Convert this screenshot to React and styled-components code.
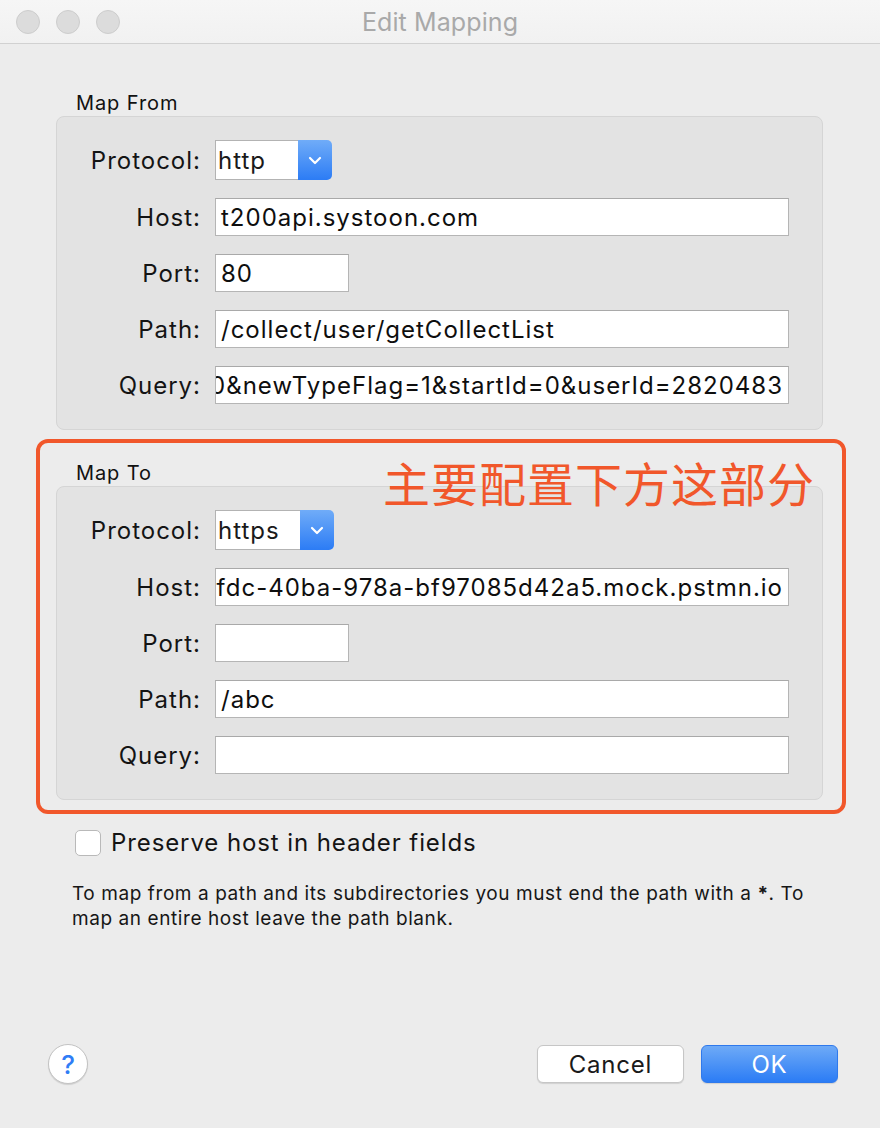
import React from 'react'
import styled, { createGlobalStyle } from 'styled-components'

const GlobalStyle = createGlobalStyle`
    html, body {
        margin: 0;
        padding: 0;
        background: #ececec;
    }
    body {
        font-family: Inter, "Noto Sans", "Liberation Sans", sans-serif;
        color: #1a1a1a;
    }
`

const fromFields = [
    { label: 'Host:', value: 't200api.systoon.com' },
    { label: 'Port:', value: '80', short: true },
    { label: 'Path:', value: '/collect/user/getCollectList' },
    { label: 'Query:', value: '0&newTypeFlag=1&startId=0&userId=2820483', scrolled: true },
]

const toFields = [
    { label: 'Host:', value: 'fdc-40ba-978a-bf97085d42a5.mock.pstmn.io', scrolled: true },
    { label: 'Port:', value: '', short: true },
    { label: 'Path:', value: '/abc' },
    { label: 'Query:', value: '' },
]

function Chevron() {
    return (
        <svg width="14" height="9" viewBox="0 0 14 9">
            <path d="M2 2l5 5 5-5" fill="none" stroke="#fff" strokeWidth="2.2" strokeLinecap="round" strokeLinejoin="round" />
        </svg>
    )
}

function MappingBox({ protocol, fields, selectWidth }) {
    return (
        <Box>
            <Label>Protocol:</Label>
            <Select width={selectWidth}>
                <SelectValue>{protocol}</SelectValue>
                <SelectButton><Chevron /></SelectButton>
            </Select>
            {fields.map(f => (
                <React.Fragment key={f.label}>
                    <Label>{f.label}</Label>
                    <Field short={f.short} scrolled={f.scrolled}>
                        <span>{f.value}</span>
                    </Field>
                </React.Fragment>
            ))}
        </Box>
    )
}

function App() {
    return (
        <Window>
            <GlobalStyle />
            <TitleBar>
                <Lights>
                    <Light />
                    <Light />
                    <Light />
                </Lights>
                <Title>Edit Mapping</Title>
            </TitleBar>
            <Content>
                <Legend>Map From</Legend>
                <MappingBox protocol="http" fields={fromFields} selectWidth={117} />
                <Highlight>
                    <Legend>Map To</Legend>
                    <MappingBox protocol="https" fields={toFields} selectWidth={119} />
                    <Annotation>主要配置下方这部分</Annotation>
                </Highlight>
                <CheckRow>
                    <CheckBox />
                    <CheckLabel>Preserve host in header fields</CheckLabel>
                </CheckRow>
                <Hint>
                    To map from a path and its subdirectories you must end the path with a <b>*</b>. To<br />
                    map an entire host leave the path blank.
                </Hint>
            </Content>
            <Footer>
                <HelpButton>?</HelpButton>
                <Buttons>
                    <Button>Cancel</Button>
                    <Button primary>OK</Button>
                </Buttons>
            </Footer>
        </Window>
    )
}

export default App

const Window = styled.div`
    width: 880px;
    height: 1128px;
    display: flex;
    flex-direction: column;
    background: #ececec;
    overflow: hidden;
`

const TitleBar = styled.div`
    height: 43px;
    flex: none;
    display: flex;
    align-items: center;
    justify-content: center;
    position: relative;
    background: linear-gradient(#f6f6f6, #f1f1f1);
    border-bottom: 1px solid #d1d1d1;
`

const Lights = styled.div`
    position: absolute;
    left: 16px;
    top: 10px;
    display: flex;
    gap: 16px;
`

const Light = styled.div`
    width: 22px;
    height: 22px;
    border-radius: 50%;
    background: #dcdcdc;
    border: 1px solid #cdcdcd;
`

const Title = styled.div`
    font-size: 25px;
    color: #a9a9a9;
    letter-spacing: 0.1px;
`

const Content = styled.div`
    padding: 47px 57px 0 56px;
    display: flex;
    flex-direction: column;
`

const Legend = styled.div`
    font-size: 20px;
    line-height: 25px;
    margin-left: 20px;
    letter-spacing: 0.9px;
    color: #111;
`

const Box = styled.div`
    display: grid;
    grid-template-columns: 144px 1fr;
    grid-auto-rows: 38px;
    grid-template-rows: 40px;
    column-gap: 14px;
    row-gap: 18px;
    align-items: center;
    padding: 23px 33px 25px 0;
    background: #e3e3e3;
    border: 1px solid #d5d5d5;
    border-radius: 8px;
`

const Label = styled.div`
    font-size: 24px;
    letter-spacing: 1px;
    text-align: right;
    color: #141414;
`

const Select = styled.div`
    width: ${p => p.width}px;
    height: 40px;
    display: flex;
`

const SelectValue = styled.div`
    flex: 1;
    background: #fff;
    border: 1px solid #b3b3b3;
    border-right: none;
    display: flex;
    align-items: center;
    padding-left: 2px;
    font-size: 24px;
    letter-spacing: 1px;
`

const SelectButton = styled.div`
    width: 34px;
    display: flex;
    align-items: center;
    justify-content: center;
    background: linear-gradient(#70acf8, #2c7cf5);
    border-radius: 0 5px 5px 0;
`

const Field = styled.div`
    height: 38px;
    width: ${p => (p.short ? '134px' : 'auto')};
    box-sizing: border-box;
    background: #fff;
    border: 1px solid #b5b5b5;
    border-top-color: #a9a9a9;
    display: flex;
    align-items: center;
    justify-content: ${p => (p.scrolled ? 'flex-end' : 'flex-start')};
    padding: 0 5px;
    overflow: hidden;
    white-space: nowrap;
    font-size: 24px;
    letter-spacing: 1px;
    color: #0e0e0e;

    span {
        flex: none;
    }
`

const Highlight = styled.div`
    position: relative;
    margin: 9px -23px 0 -20px;
    padding: 18px 19px 10px 16px;
    border: 4px solid #f1572b;
    border-radius: 12px;
`

const Annotation = styled.div`
    position: absolute;
    top: 11px;
    right: 27px;
    font-family: "Noto Sans CJK SC", sans-serif;
    font-size: 47px;
    line-height: 56px;
    color: #f1572b;
    letter-spacing: 1px;
`

const CheckRow = styled.div`
    display: flex;
    align-items: center;
    gap: 10px;
    margin: 14px 0 0 19px;
`

const CheckBox = styled.div`
    width: 24px;
    height: 24px;
    background: #fff;
    border: 1px solid #b9b9b9;
    border-radius: 5px;
`

const CheckLabel = styled.div`
    font-size: 24px;
    letter-spacing: 0.9px;
    color: #141414;
`

const Hint = styled.div`
    margin: 24px 0 0 16px;
    font-size: 19px;
    line-height: 25px;
    letter-spacing: 0.58px;
    color: #161616;
`

const Footer = styled.div`
    margin-top: auto;
    display: flex;
    align-items: center;
    justify-content: space-between;
    padding: 0 42px 44px 48px;
`

const HelpButton = styled.div`
    width: 38px;
    height: 38px;
    border-radius: 50%;
    background: #fff;
    border: 1px solid #c3c3c3;
    box-shadow: 0 1px 1px rgba(0, 0, 0, 0.12);
    display: flex;
    align-items: center;
    justify-content: center;
    color: #2f7df6;
    font-size: 26px;
    font-weight: 500;
`

const Buttons = styled.div`
    display: flex;
    gap: 17px;
`

const Button = styled.div`
    width: ${p => (p.primary ? '137px' : '147px')};
    height: 38px;
    box-sizing: border-box;
    border-radius: 6px;
    display: flex;
    align-items: center;
    justify-content: center;
    font-size: 24px;
    letter-spacing: 0.8px;
    color: ${p => (p.primary ? '#fff' : '#1a1a1a')};
    background: ${p => (p.primary ? 'linear-gradient(#6eaaf7, #2b7cf5)' : '#fff')};
    border: 1px solid ${p => (p.primary ? '#2f79ec' : '#c6c6c6')};
    box-shadow: 0 1px 1px rgba(0, 0, 0, 0.12);
`
